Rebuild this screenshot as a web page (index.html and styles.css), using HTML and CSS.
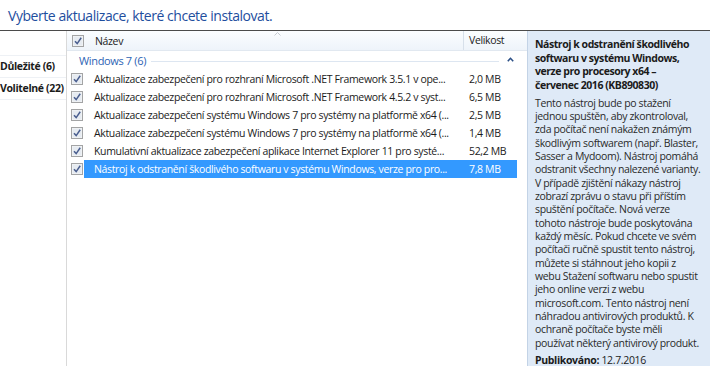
FILE: index.html
```
<!DOCTYPE html>
<html lang="cs">
<head>
    <meta charset="UTF-8">
    <title>Windows Update</title>
    <link rel="stylesheet" href="styles.css">
</head>
<body>
    <svg class="defs" width="0" height="0">
        <symbol id="chk" viewBox="0 0 12 12">
            <rect x="0.5" y="0.5" width="11" height="11" fill="#f6f6f6" stroke="#a3a4a5"/>
            <rect x="1.5" y="1.5" width="9" height="9" fill="#e6ebf1"/>
            <path d="M3 6.2 L5.2 8.6 L9.2 2.8" fill="none" stroke="#4a5e8f" stroke-width="1.5"/>
        </symbol>
    </svg>

    <div class="title">Vyberte aktualizace, které chcete instalovat.</div>

    <div class="main">
        <div class="sidebar">
            <div class="cat">Důležité (6)</div>
            <div class="cat">Volitelné (22)</div>
        </div>

        <div class="list">
            <div class="head">
                <div class="head-name">
                    <svg class="cb"><use href="#chk"/></svg>
                    <span class="head-label">Název</span>
                    <svg class="sort" width="7" height="4" viewBox="0 0 7 4"><path d="M0.5 3.5 L3.5 0.5 L6.5 3.5" fill="none" stroke="#c6cbd2"/></svg>
                </div>
                <div class="head-size">Velikost</div>
            </div>

            <div class="group">
                <span class="group-name">Windows 7 (6)</span>
                <span class="group-line"></span>
                <svg class="chevron" width="7" height="5" viewBox="0 0 7 5"><path d="M0.8 4.2 L3.5 1.3 L6.2 4.2" fill="none" stroke="#2b4f86" stroke-width="1.6"/></svg>
            </div>

            <div class="row">
                <svg class="cb"><use href="#chk"/></svg>
                <div class="item">
                    <span class="name">Aktualizace zabezpečení pro rozhraní Microsoft .NET Framework 3.5.1 v ope...</span>
                    <span class="size">2,0 MB</span>
                </div>
            </div>
            <div class="row">
                <svg class="cb"><use href="#chk"/></svg>
                <div class="item">
                    <span class="name">Aktualizace zabezpečení pro rozhraní Microsoft .NET Framework 4.5.2 v syst...</span>
                    <span class="size">6,5 MB</span>
                </div>
            </div>
            <div class="row">
                <svg class="cb"><use href="#chk"/></svg>
                <div class="item">
                    <span class="name">Aktualizace zabezpečení systému Windows 7 pro systémy na platformě x64 (...</span>
                    <span class="size">2,5 MB</span>
                </div>
            </div>
            <div class="row">
                <svg class="cb"><use href="#chk"/></svg>
                <div class="item">
                    <span class="name">Aktualizace zabezpečení systému Windows 7 pro systémy na platformě x64 (...</span>
                    <span class="size">1,4 MB</span>
                </div>
            </div>
            <div class="row">
                <svg class="cb"><use href="#chk"/></svg>
                <div class="item">
                    <span class="name">Kumulativní aktualizace zabezpečení aplikace Internet Explorer 11 pro systé...</span>
                    <span class="size">52,2 MB</span>
                </div>
            </div>
            <div class="row">
                <svg class="cb"><use href="#chk"/></svg>
                <div class="item selected">
                    <span class="name">Nástroj k odstranění škodlivého softwaru v systému Windows, verze pro pro...</span>
                    <span class="size">7,8 MB</span>
                </div>
            </div>
        </div>

        <div class="details">
            <div class="details-title">Nástroj k odstranění škodlivého<br>softwaru v systému Windows,<br>verze pro procesory x64 –<br>červenec 2016 (KB890830)</div>
            <div class="details-text">Tento nástroj bude po stažení<br>jednou spuštěn, aby zkontroloval,<br>zda počítač není nakažen známým<br>škodlivým softwarem (např. Blaster,<br>Sasser a Mydoom). Nástroj pomáhá<br>odstranit všechny nalezené varianty.<br>V případě zjištění nákazy nástroj<br>zobrazí zprávu o stavu při příštím<br>spuštění počítače. Nová verze<br>tohoto nástroje bude poskytována<br>každý měsíc. Pokud chcete ve svém<br>počítači ručně spustit tento nástroj,<br>můžete si stáhnout jeho kopii z<br>webu Stažení softwaru nebo spustit<br>jeho online verzi z webu<br>microsoft.com. Tento nástroj není<br>náhradou antivirových produktů. K<br>ochraně počítače byste měli<br>používat některý antivirový produkt.</div>
            <div class="published"><b>Publikováno:</b> 12.7.2016</div>
        </div>
    </div>
</body>
</html>
```

FILE: styles.css
```
body {
    margin: 0;
    width: 710px;
    height: 366px;
    overflow: hidden;
    background-color: #fff;
    font-family: "Open Sans", "Noto Sans", sans-serif;
    font-size: 10.5px;
    letter-spacing: -0.35px;
    color: #1b1b1b;
}

.defs {
    position: absolute;
}

.title {
    height: 30px;
    padding-left: 8px;
    line-height: 32px;
    font-size: 14px;
    letter-spacing: -0.45px;
    color: #1e4e9e;
    box-sizing: border-box;
}

.main {
    display: flex;
    height: 336px;
    border-top: 1px solid #4b4b4b;
}

/* left category column */
.sidebar {
    width: 66px;
    padding-top: 24px;
    border-right: 1px solid #d9d9d9;
}

.cat {
    height: 21px;
    line-height: 21px;
    font-weight: bold;
    white-space: nowrap;
    border-top: 1px solid #eef1f5;
}

.cat + .cat {
    border-bottom: 1px solid #eef1f5;
}

/* update list */
.list {
    width: 460px;
}

.head {
    display: flex;
    height: 19px;
    background: linear-gradient(#fbfdff, #eef4fa);
    border-bottom: 1px solid #e1e8f0;
}

.head-name {
    display: flex;
    align-items: center;
    width: 396px;
    border-right: 1px solid #d7e0ea;
    position: relative;
}

.head-name .cb {
    margin-left: 5px;
}

.head-label {
    margin-left: 11px;
}

.sort {
    position: absolute;
    left: 207px;
    top: 1px;
}

.head-size {
    padding-left: 5px;
    line-height: 19px;
}

.cb {
    width: 12px;
    height: 12px;
    flex: none;
}

.group {
    display: flex;
    align-items: center;
    height: 19px;
    padding-left: 12px;
    padding-right: 13px;
}

.group-name {
    color: #2d63b4;
    font-size: 11px;
}

.group-line {
    flex: 1;
    height: 1px;
    margin: 1px 8px 0 5px;
    background-color: #dde6f1;
}

.chevron {
    margin-top: -2px;
}

.row {
    display: flex;
    align-items: center;
    height: 18px;
}

.row .cb {
    margin-left: 4px;
    margin-right: 1px;
}

.item {
    display: flex;
    align-items: center;
    flex: 1;
    height: 18px;
    margin-right: 10px;
}

.item.selected {
    background-color: #3399ff;
    color: #fff;
}

.name {
    width: 370px;
    padding-left: 10px;
    overflow: hidden;
    white-space: nowrap;
}

.size {
    padding-left: 5px;
    white-space: nowrap;
}

/* details pane */
.details {
    flex: 1;
    padding: 7px 0 0 7px;
    background-color: #dfeaf7;
    border-left: 1px solid #c3d3e6;
    white-space: nowrap;
}

.details-title {
    font-weight: bold;
    font-size: 10.5px;
    letter-spacing: -0.45px;
    line-height: 13.7px;
    margin-bottom: 4px;
}

.details-text {
    line-height: 13.33px;
    color: #2a2a2a;
}

.published {
    margin-top: 3px;
    line-height: 14px;
}
```
